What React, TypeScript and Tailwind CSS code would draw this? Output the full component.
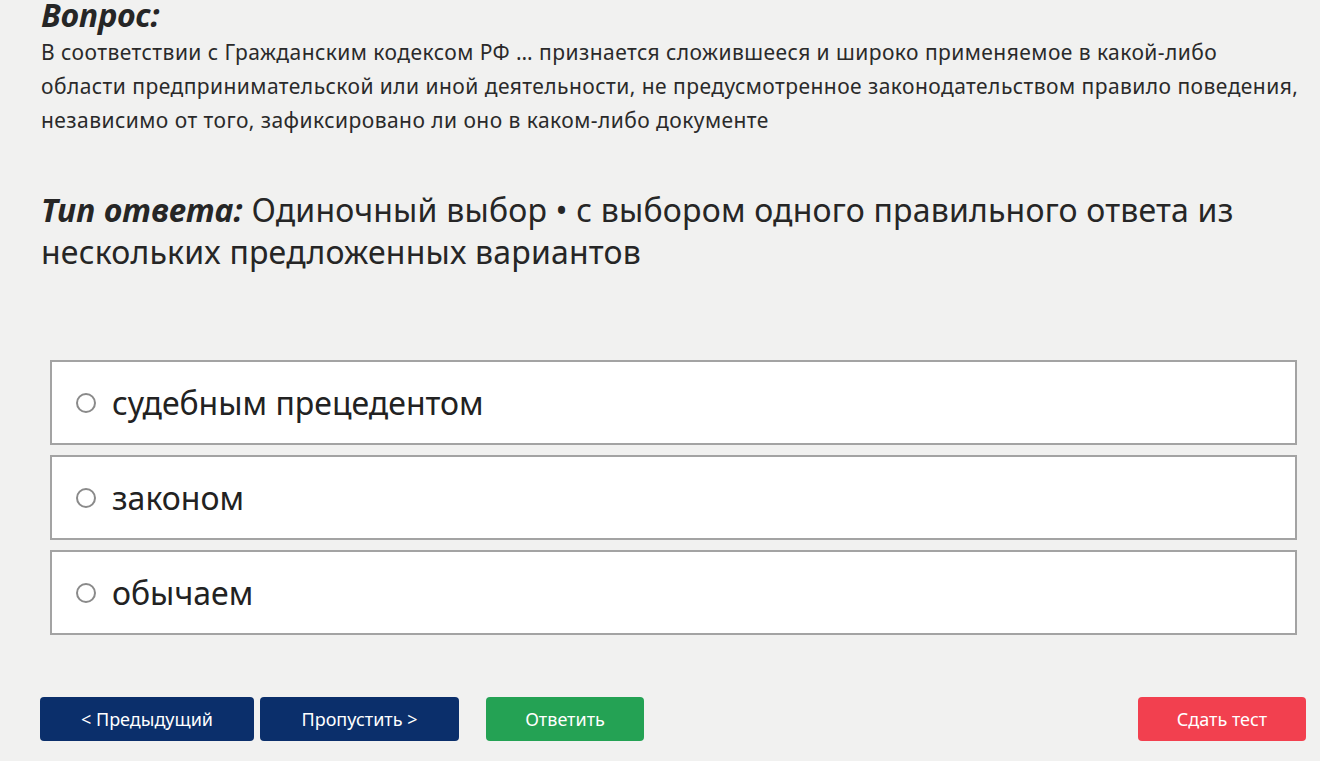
import { useState } from 'react';

const options = ['судебным прецедентом', 'законом', 'обычаем'];

const questionLines = [
  'В соответствии с Гражданским кодексом РФ … признается сложившееся и широко применяемое в какой-либо',
  'области предпринимательской или иной деятельности, не предусмотренное законодательством правило поведения,',
  'независимо от того, зафиксировано ли оно в каком-либо документе',
];

function Radio({ checked }: { checked: boolean }) {
  return (
    <span className="size-[20px] rounded-full border-2 border-[#8a8a8a] bg-white flex items-center justify-center shrink-0">
      {checked && <span className="size-[10px] rounded-full bg-[#0b2f6b]" />}
    </span>
  );
}

export default function App() {
  const [selected, setSelected] = useState<number | null>(null);

  return (
    <div
      className="w-[1320px] h-[761px] overflow-hidden bg-[#f1f1f0] text-[#262626] flex flex-col"
      style={{ fontFamily: '"Noto Sans", "Open Sans", sans-serif' }}
    >
      <div className="pl-[41px] pr-4">
        <h2 className="text-[32px] font-bold italic leading-[30px]">Вопрос:</h2>
        <p className="mt-[5px] text-[21px] leading-[34px] tracking-[0.45px] text-[#2a2a2a]">
          {questionLines.map((l) => (
            <span key={l} className="block whitespace-nowrap">
              {l}
            </span>
          ))}
        </p>
        <p className="mt-[52px] text-[32px] leading-[42px] tracking-[0.2px] whitespace-nowrap">
          <span className="font-bold italic">Тип ответа:</span> Одиночный выбор • с выбором одного правильного ответа из
          <br />
          нескольких предложенных вариантов
        </p>
      </div>

      <div className="mt-[87px] ml-[50px] mr-[23px] flex flex-col gap-[10px]">
        {options.map((o, i) => (
          <button
            key={o}
            type="button"
            onClick={() => setSelected(i)}
            className="h-[85px] bg-white border-2 border-[#a3a3a3] flex items-center gap-[16px] pl-[24px] text-left"
          >
            <Radio checked={selected === i} />
            <span className="text-[32px] text-[#222]">{o}</span>
          </button>
        ))}
      </div>

      <div className="mt-[62px] pl-[40px] pr-[14px] flex items-center text-[18px] text-white">
        <button type="button" className="w-[214px] h-[44px] rounded-[4px] bg-[#0b2f6b]">
          &lt; Предыдущий
        </button>
        <button type="button" className="ml-[6px] w-[199px] h-[44px] rounded-[4px] bg-[#0b2f6b]">
          Пропустить &gt;
        </button>
        <button type="button" className="ml-[27px] w-[158px] h-[44px] rounded-[4px] bg-[#24a254]">
          Ответить
        </button>
        <button type="button" className="ml-auto w-[168px] h-[44px] rounded-[4px] bg-[#f2404f]">
          Сдать тест
        </button>
      </div>
    </div>
  );
}
